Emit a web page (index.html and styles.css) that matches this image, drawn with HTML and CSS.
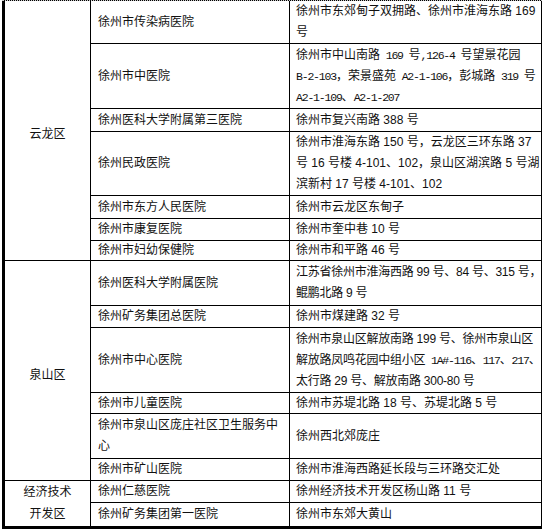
FILE: index.html
```html
<!DOCTYPE html>
<html lang="zh-CN">
<head>
<meta charset="utf-8">
<link rel="stylesheet" href="styles.css">
</head>
<body>
<div class="tbl">
  <div class="c1">云龙区</div>
  <div class="c2">徐州市传染病医院</div>
  <div class="c3">徐州市东郊甸子双拥路、徐州市淮海东路 169<br>号</div>
  <div class="c2">徐州市中医院</div>
  <div class="c3 blk">徐州市中山南路<span class="m"> 169 </span>号<span class="m">,126-4 </span>号望景花园<br><span class="m">B-2-103</span>，荣景盛苑<span class="m"> A2-1-106</span>，彭城路<span class="m"> 319 </span>号<br><span class="m">A2-1-109</span>、<span class="m">A2-1-207</span></div>
  <div class="c2">徐州医科大学附属第三医院</div>
  <div class="c3">徐州市复兴南路 388 号</div>
  <div class="c2">徐州民政医院</div>
  <div class="c3">徐州市淮海东路 150 号，云龙区三环东路 37<br>号 16 号楼 4-101、102，泉山区湖滨路 5 号湖<br>滨新村 17 号楼 4-101、102</div>
  <div class="c2">徐州市东方人民医院</div>
  <div class="c3">徐州市云龙区东甸子</div>
  <div class="c2">徐州市康复医院</div>
  <div class="c3">徐州市奎中巷 10 号</div>
  <div class="c2">徐州市妇幼保健院</div>
  <div class="c3">徐州市和平路 46 号</div>

  <div class="c1 quanshan">泉山区</div>
  <div class="c2">徐州医科大学附属医院</div>
  <div class="c3 tight">江苏省徐州市淮海西路 99 号、84 号、315 号，<br>鲲鹏北路 9 号</div>
  <div class="c2">徐州矿务集团总医院</div>
  <div class="c3">徐州市煤建路 32 号</div>
  <div class="c2">徐州市中心医院</div>
  <div class="c3 blk tight">徐州市泉山区解放南路 199 号、徐州市泉山区<br>解放路凤鸣花园中组小区<span class="m"> 1A#-116</span>、<span class="m">117</span>、<span class="m">217</span>、<br>太行路 29 号、解放南路 300-80 号</div>
  <div class="c2">徐州市儿童医院</div>
  <div class="c3">徐州市苏堤北路 18 号、苏堤北路 5 号</div>
  <div class="c2">徐州市泉山区庞庄社区卫生服务中<br>心</div>
  <div class="c3">徐州西北郊庞庄</div>
  <div class="c2">徐州市矿山医院</div>
  <div class="c3">徐州市淮海西路延长段与三环路交汇处</div>

  <div class="c1 jingji">经济技术<br>开发区</div>
  <div class="c2">徐州仁慈医院</div>
  <div class="c3">徐州经济技术开发区杨山路 11 号</div>
  <div class="c2">徐州矿务集团第一医院</div>
  <div class="c3">徐州市东郊大黄山</div>
</div>
</body>
</html>
```
FILE: styles.css
```css
html, body {
  margin: 0;
  padding: 0;
  background: #fff;
}

body {
  width: 546px;
  height: 529px;
  overflow: hidden;
  font-family: "Liberation Sans", "Noto Sans CJK SC", sans-serif;
  font-size: 12px;
  color: #111;
}

.tbl {
  margin-left: 2px;
  width: 540px;
  box-sizing: border-box;
  display: grid;
  grid-template-columns: 85px 198px 251px;
  grid-template-rows: 42px 64px 22px 63px 22px 21px 19px 44px 21px 64px 20px 44px 21px 21px 23px;
  gap: 1px;
  background: #000;
  border-top: 1px dotted #c8c8c8;
  padding: 0 1px 3px 3px;
}

.tbl > div {
  background: #fff;
  display: flex;
  align-items: center;
  line-height: 21px;
  white-space: nowrap;
}

.tbl > .blk {
  display: block;
  padding-top: 1px;
}

.c1 {
  grid-column: 1;
  grid-row: span 7;
  justify-content: center;
  padding-top: 8px;
  box-sizing: border-box;
}

.c1.quanshan {
  grid-row: span 6;
  padding-top: 10px;
}

.c1.jingji {
  grid-row: span 2;
  align-items: flex-start;
  text-align: center;
  line-height: 22px;
  padding-top: 0;
}

.c2 {
  padding-left: 7px;
}

.c3 {
  padding-left: 6px;
}

.tight {
  letter-spacing: -0.25px;
}

.m {
  font-family: "Liberation Mono", monospace;
  font-size: 11.5px;
  letter-spacing: -1.2px;
}
```
